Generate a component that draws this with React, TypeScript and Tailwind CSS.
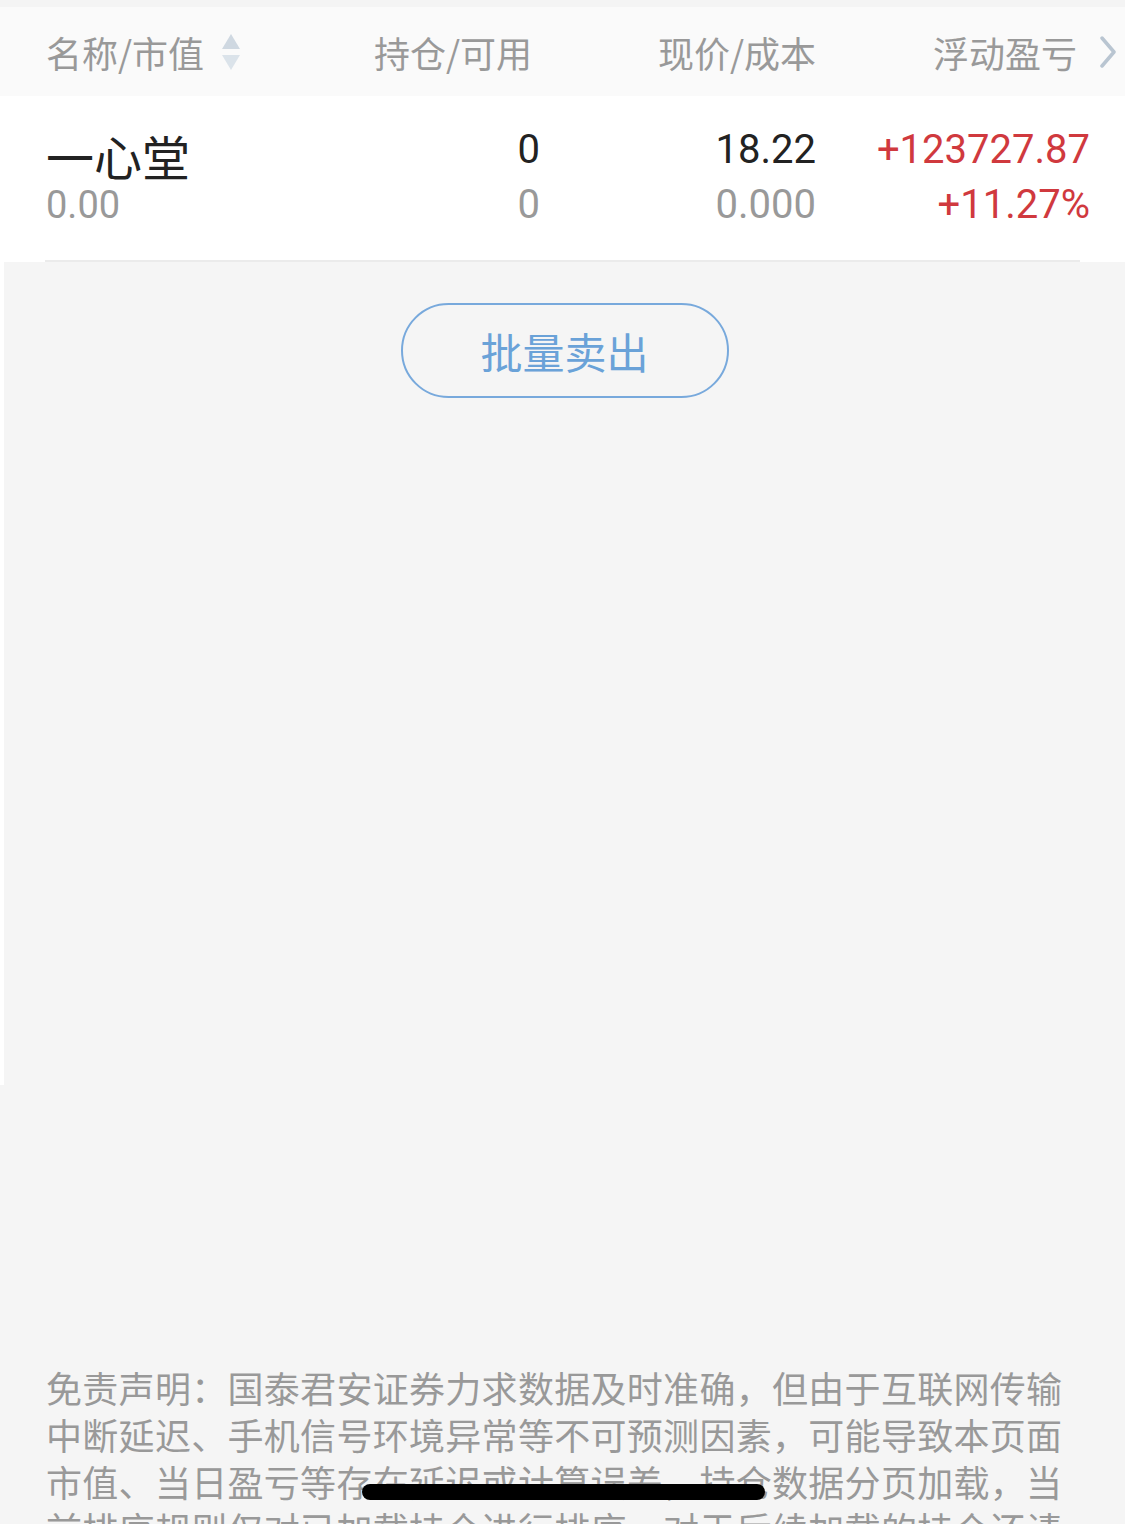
import React from "react";

const cjk = {
  fontFamily: '"Noto Sans CJK SC", "Noto Sans", sans-serif',
};

const num = {
  fontFamily: 'Roboto, "Liberation Sans", "Noto Sans CJK SC", sans-serif',
};

function SortIcon() {
  return (
    <svg width="22" height="40" viewBox="0 0 22 40" className="ml-[16px]">
      <path d="M11 2 L20 17 L2 17 Z" fill="#cfd8e1" />
      <path d="M11 38 L20 23 L2 23 Z" fill="#dbe3ea" />
    </svg>
  );
}

function Chevron() {
  return (
    <svg width="18" height="32" viewBox="0 0 18 32" className="ml-[22px]">
      <path
        d="M3 2 L15 16 L3 30"
        fill="none"
        stroke="#b9c5d1"
        strokeWidth="3.5"
        strokeLinecap="round"
        strokeLinejoin="round"
      />
    </svg>
  );
}

export default function App() {
  return (
    <div className="relative h-[1524px] w-[1125px] overflow-hidden bg-[#f5f5f5]" style={cjk}>
      <div className="h-[7px] bg-[#f4f4f4]" />

      {/* 表头 */}
      <div className="grid h-[89px] grid-cols-[250px_244px_276px_274px] items-center bg-[#fafafa] pl-[46px] text-[36px] text-[#999999]">
        <div className="flex items-center">
          <span>名称/市值</span>
          <SortIcon />
        </div>
        <div className="pr-[8px] text-right">持仓/可用</div>
        <div className="text-right">现价/成本</div>
        <div className="flex items-center justify-end -mr-[27px]">
          <span>浮动盈亏</span>
          <Chevron />
        </div>
      </div>

      {/* 持仓行 */}
      <div className="bg-white">
        <div className="grid h-[164px] grid-cols-[250px_244px_276px_274px] pl-[46px] pt-[26px]">
          <div>
            <div className="pt-[9px] text-[48px] leading-[48px] text-[#222222]">一心堂</div>
            <div className="text-[38px] leading-[52px] text-[#999999]" style={num}>
              0.00
            </div>
          </div>
          <div className="text-right text-[40px] leading-[55px]" style={num}>
            <div className="text-[#222222]">0</div>
            <div className="text-[#999999]">0</div>
          </div>
          <div className="text-right text-[40px] leading-[55px]" style={num}>
            <div className="text-[#222222]">18.22</div>
            <div className="text-[#999999]">0.000</div>
          </div>
          <div className="text-right text-[40px] leading-[55px] text-[#d0393e]" style={num}>
            <div>+123727.87</div>
            <div>+11.27%</div>
          </div>
        </div>
        <div className="mx-[45px] h-[2px] bg-[#ebebeb]" />
      </div>

      {/* 操作区 */}
      <div className="h-[823px] border-l-[4px] border-white pt-[41px]">
        <button
          type="button"
          className="mx-auto flex h-[95px] w-[328px] items-center justify-center rounded-full border-2 border-[#78a9dc] text-[42px] text-[#6aa2d8]"
        >
          批量卖出
        </button>
      </div>

      {/* 免责声明 */}
      <div className="w-[1070px] pl-[46px] pt-[279px] text-[36px] leading-[47px] tracking-[0.3px] text-[#999999]">
        免责声明：国泰君安证券力求数据及时准确，但由于互联网传输中断延迟、手机信号环境异常等不可预测因素，可能导致本页面市值、当日盈亏等存在延迟或计算误差，持仓数据分页加载，当前排序规则仅对已加载持仓进行排序，对于后续加载的持仓还请下拉加载全部后再进行排序。
      </div>

      {/* Home indicator */}
      <div className="absolute left-[362px] top-[1484px] h-[16px] w-[403px] rounded-full bg-black" />
    </div>
  );
}
